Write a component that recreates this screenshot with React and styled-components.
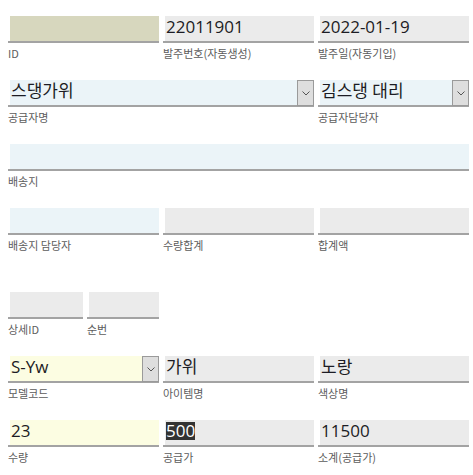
import React from 'react';
import styled, { createGlobalStyle } from 'styled-components';

const GlobalStyle = createGlobalStyle`
  body {
    margin: 0;
    background: #fff;
    font-family: "Open Sans", "Noto Sans CJK KR", sans-serif;
  }
`;

const Form = styled.div`
  width: 473px;
  padding: 16px 4px 0 8px;
  box-sizing: border-box;
`;

const Row = styled.div`
  display: grid;
  grid-template-columns: ${(p) => p.$cols || '151px 151px 151px'};
  column-gap: 4px;
  margin-bottom: ${(p) => (p.$gap ? p.$gap : 19)}px;
`;

const Field = styled.div`
  display: flex;
  flex-direction: column;
  grid-column: ${(p) => (p.$span ? `span ${p.$span}` : 'auto')};
`;

const Box = styled.div`
  display: flex;
  align-items: stretch;
  height: 25px;
  padding-left: 2px;
  background: ${(p) => p.$bg || '#ebebeb'};
  background-clip: content-box;
  border-bottom: 2px solid #a3a3a3;
`;

const Value = styled.div`
  flex: 1;
  padding-left: 1px;
  font-size: 17px;
  line-height: 22px;
  color: #1c1c24;
  white-space: nowrap;
  overflow: hidden;
`;

const Selected = styled.span`
  background: #333;
  color: #fff;
  display: inline-block;
  line-height: 18px;
`;

const DropButton = styled.div`
  width: 15px;
  height: 24px;
  background: #dedede;
  border: 1px solid #9a9a9a;
  display: flex;
  align-items: center;
  justify-content: center;
  margin-bottom: -2px;
`;

const Label = styled.div`
  margin-top: 2px;
  font-family: "Noto Sans CJK KR", sans-serif;
  font-size: 11px;
  line-height: 16px;
  color: #5c5c5c;
`;

const Chevron = () => (
  <svg width="8" height="5" viewBox="0 0 8 5">
    <path d="M0.5 0.5 L4 4 L7.5 0.5" fill="none" stroke="#555" strokeWidth="1" />
  </svg>
);

const Input = ({ label, value, bg, select, span, children }) => (
  <Field $span={span}>
    <Box $bg={bg}>
      <Value>{children || value}</Value>
      {select && (
        <DropButton>
          <Chevron />
        </DropButton>
      )}
    </Box>
    <Label>{label}</Label>
  </Field>
);

const App = () => (
  <>
    <GlobalStyle />
    <Form>
      <Row>
        <Input label="ID" bg="#d7d7be" />
        <Input label="발주번호(자동생성)" value="22011901" />
        <Input label="발주일(자동기입)" value="2022-01-19" />
      </Row>
      <Row>
        <Input label="공급자명" value="스댕가위" bg="#ebf4f8" select span={2} />
        <Input label="공급자담당자" value="김스댕 대리" bg="#ebf4f8" select />
      </Row>
      <Row $cols="1fr">
        <Input label="배송지" bg="#ebf4f8" />
      </Row>
      <Row $gap={39}>
        <Input label="배송지 담당자" bg="#ebf4f8" />
        <Input label="수량합계" />
        <Input label="합계액" />
      </Row>
      <Row $cols="75px 72px">
        <Input label="상세ID" />
        <Input label="순번" />
      </Row>
      <Row>
        <Input label="모델코드" value="S-Yw" bg="#fcfde2" select />
        <Input label="아이템명" value="가위" />
        <Input label="색상명" value="노랑" />
      </Row>
      <Row>
        <Input label="수량" value="23" bg="#fcfde2" />
        <Input label="공급가">
          <Selected>500</Selected>
        </Input>
        <Input label="소계(공급가)" value="11500" />
      </Row>
    </Form>
  </>
);

export default App;
